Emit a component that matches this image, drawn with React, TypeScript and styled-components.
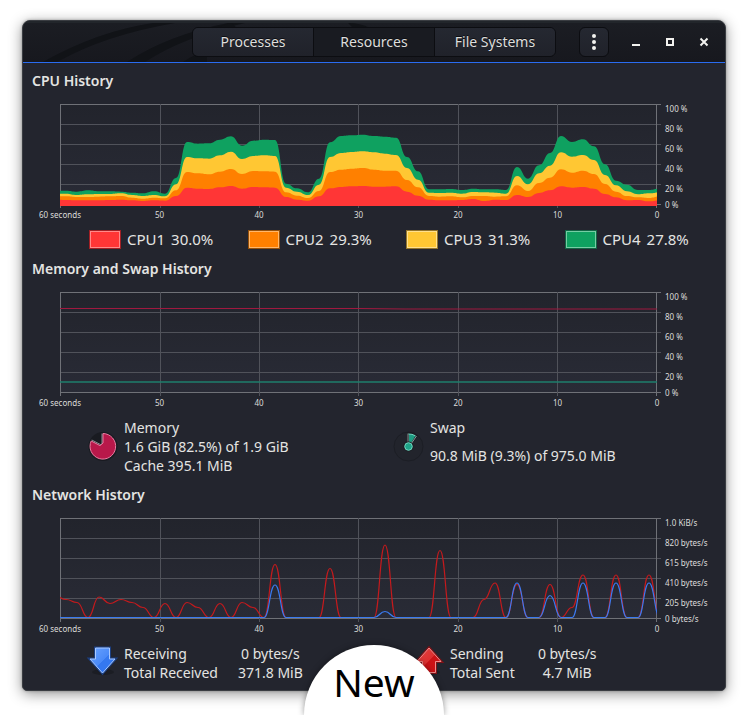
import React from "react";
import styled, { createGlobalStyle } from "styled-components";

const GlobalStyle = createGlobalStyle`
  *, *::before, *::after { box-sizing: border-box; }
  body {
    margin: 0;
    background: #ffffff;
    color: #e4e4e2;
    font-family: "Noto Sans", "Open Sans", sans-serif;
    font-size: 14px;
  }
`;

const Page = styled.div`
  position: relative;
  min-height: 100vh;
  padding: 20px 22px 24px;
  overflow: hidden;
`;

const AppWindow = styled.main`
  border: 1px solid #3a3d42;
  border-radius: 8px 8px 5px 5px;
  background: #23252e;
  box-shadow: 0 3px 14px rgba(0, 0, 0, 0.42), 0 0 3px rgba(0, 0, 0, 0.3);
  overflow: hidden;
  padding: 0 1px 6px;
`;

const HeaderBar = styled.header`
  position: relative;
  display: grid;
  grid-template-columns: 1fr auto 1fr;
  align-items: center;
  height: 42px;
  margin: 0 -1px;
  padding: 0 4px 2px;
  border-top: 2px solid #22262b;
  border-bottom: 1px solid #2a6cf0;
  background: linear-gradient(#1b1d23, #17181e);
`;

const HeaderArt = styled.svg`
  position: absolute;
  inset: 0 auto 0 0;
  height: 39px;
  width: 400px;
`;

const TabGroup = styled.nav`
  position: relative;
  grid-column: 2;
  display: flex;
  border: 1px solid #0c0d11;
  border-radius: 6px;
  overflow: hidden;
`;

const TabButton = styled.button<{ $active?: boolean }>`
  width: 121px;
  height: 28px;
  padding: 0;
  border: 0;
  border-left: 1px solid #0c0d11;
  background: ${(p) => (p.$active ? "#191b21" : "linear-gradient(#252831, #20222a)")};
  color: #dededc;
  font: inherit;
  line-height: 28px;
  text-shadow: 0 -1px 0 #0c0d11;
  &:first-child {
    width: 120px;
    border-left: 0;
  }
`;

const HeaderActions = styled.div`
  position: relative;
  display: flex;
  justify-content: flex-end;
  align-items: center;
`;

const MenuButton = styled.button`
  display: grid;
  place-items: center;
  width: 30px;
  height: 30px;
  margin-right: 10px;
  padding: 0;
  border: 1px solid #0c0d11;
  border-radius: 6px;
  background: linear-gradient(#252831, #20222a);
`;

const WindowButton = styled.button`
  display: grid;
  place-items: center;
  width: 34px;
  height: 30px;
  padding: 0;
  border: 0;
  background: none;
`;

const Section = styled.section`
  padding: 8px 0 2px;
`;

const SectionTitle = styled.h2`
  margin: 0 0 8px 8px;
  font-size: 14px;
  font-weight: 600;
  line-height: 20px;
`;

const ChartFrame = styled.div`
  display: grid;
  grid-template-columns: minmax(0, 1fr) 59px;
  column-gap: 4px;
  padding-left: 36px;
`;

const Plot = styled.svg`
  display: block;
  width: 100%;
  height: 110px;
`;

const ValueAxis = styled.div`
  display: flex;
  flex-direction: column;
  height: 110px;
  color: #dcdcda;
  font-size: 8px;
  line-height: 20px;
  white-space: nowrap;
`;

const ValueLabel = styled.span`
  &:last-child {
    line-height: 12px;
  }
`;

const TimeAxis = styled.div`
  display: flex;
  justify-content: space-between;
  padding-right: 4px;
  color: #dcdcda;
  font-size: 8px;
  line-height: 12px;
`;

const TimeLabel = styled.span`
  display: flex;
  justify-content: center;
  width: 0;
  white-space: nowrap;
`;

const Legend = styled.div<{ $columns: string; $size?: number }>`
  display: grid;
  grid-template-columns: ${(p) => p.$columns};
  margin-top: 9px;
  padding: 0 1px 0 65px;
  font-size: ${(p) => p.$size ?? 14}px;
  line-height: 19px;
`;

const LegendItem = styled.div<{ $gap: number; $align?: string }>`
  display: flex;
  align-items: ${(p) => p.$align ?? "center"};
  gap: ${(p) => p.$gap}px;
  white-space: nowrap;
`;

const Swatch = styled.button<{ $fill: string; $light: string; $edge: string }>`
  width: 32px;
  height: 19px;
  padding: 0;
  border: 1px solid ${(p) => p.$edge};
  background: ${(p) => p.$fill};
  box-shadow: inset 0 0 0 1px ${(p) => p.$light};
`;

const Lines = styled.div<{ $spread?: boolean }>`
  display: flex;
  flex-direction: column;
  gap: ${(p) => (p.$spread ? 9 : 0)}px;
  align-self: flex-start;
`;

const TrafficTable = styled.table`
  border-collapse: collapse;
  th {
    padding: 0 20px 0 0;
    font-weight: 400;
    text-align: left;
  }
  td {
    min-width: 65px;
    padding: 0;
    text-align: center;
  }
`;

const Icon = styled.svg`
  display: block;
  flex: none;
  overflow: visible;
`;

const Badge = styled.div`
  position: absolute;
  bottom: 0;
  left: 50%;
  width: 140px;
  height: 70px;
  margin-left: -70px;
  border-radius: 70px 70px 0 0;
  background: #ffffff;
  box-shadow: 0 0 6px rgba(0, 0, 0, 0.4);
  color: #000000;
  font-size: 39px;
  line-height: 74px;
  text-align: center;
`;

const WIDTH = 596;
const STEP = 11;
const FIRST = -5;
const COLUMNS = [0.5, 100.5, 199.5, 298.5, 398.5, 497.5, 596.5];
const ROWS = [0.5, 20.5, 40.5, 60.5, 80.5, 100.5];

/** Smooth line through evenly spaced samples, level at each sample. */
function curve(ys: number[]) {
  return ys
    .map((y, i) => {
      const x = FIRST + i * STEP;
      if (i === 0) return `M${x} ${y}`;
      const mid = x - STEP / 2;
      return `C${mid} ${ys[i - 1]} ${mid} ${y} ${x} ${y}`;
    })
    .join("");
}

/* Upper edge of each stacked CPU band; 27 is full load and 327 is idle. */
const cpuBands = [
  {
    color: "#0fa160",
    tops: [
      287, 287, 290, 286, 289, 289, 290, 293, 295, 289, 296, 249, 141, 146, 145, 134, 124, 152, 137, 134, 135, 266,
      280, 292, 251, 142, 123, 121, 119, 123, 125, 128, 186, 229, 283, 283, 282, 285, 281, 283, 283, 285, 216, 251,
      211, 174, 123, 141, 133, 154, 208, 257, 269, 285, 285, 281,
    ],
  },
  {
    color: "#ffc733",
    tops: [
      296, 296, 300, 298, 297, 297, 295, 300, 303, 300, 304, 268, 186, 190, 191, 181, 170, 192, 183, 181, 183, 278,
      290, 300, 269, 186, 174, 171, 169, 172, 176, 180, 219, 254, 293, 294, 293, 296, 291, 292, 293, 296, 243, 268,
      235, 212, 172, 185, 180, 195, 240, 271, 289, 298, 295, 292,
    ],
  },
  {
    color: "#ff8000",
    tops: [
      303, 304, 306, 306, 305, 304, 303, 308, 311, 308, 310, 286, 231, 235, 238, 230, 222, 237, 228, 229, 230, 292,
      302, 309, 288, 231, 224, 221, 219, 224, 227, 227, 255, 277, 303, 305, 304, 307, 303, 303, 305, 304, 271, 288,
      264, 248, 223, 233, 227, 237, 267, 290, 303, 307, 309, 304,
    ],
  },
  {
    color: "#ff3636",
    tops: [
      314, 315, 316, 316, 316, 315, 314, 316, 318, 316, 317, 303, 278, 281, 282, 277, 273, 281, 276, 277, 278, 306,
      314, 317, 304, 280, 276, 274, 273, 275, 275, 274, 290, 302, 314, 316, 316, 315, 312, 318, 314, 315, 300, 306,
      294, 286, 274, 278, 276, 281, 297, 307, 316, 315, 319, 316,
    ],
  },
];

const IDLE = 99.5;
function traffic(peaks: Record<number, number>) {
  return Array.from({ length: 56 }, (_, i) => peaks[i] ?? IDLE);
}

const sending = traffic({
  0: 78, 1: 81.5, 2: 84.5, 4: 79, 5: 85.5, 6: 81.5, 7: 84.5, 8: 89.5, 10: 85.5, 12: 84.5, 13: 89.5, 15: 85.5,
  17: 84.5, 18: 89.5, 20: 46.5, 25: 50.5, 30: 27, 35: 32.5, 39: 81.5, 40: 65, 42: 66.5, 45: 66.5, 47: 89.5,
  48: 57, 51: 57, 54: 57,
});
const receiving = traffic({ 20: 67, 30: 93.5, 42: 65, 45: 77.5, 48: 65, 51: 65, 54: 65 });

const TIMES = ["60 seconds", "50", "40", "30", "20", "10", "0"];
const PERCENTS = ["100 %", "80 %", "60 %", "40 %", "20 %", "0 %"];
const RATES = ["1.0 KiB/s", "820 bytes/s", "615 bytes/s", "410 bytes/s", "205 bytes/s", "0 bytes/s"];

function Chart({ id, label, values, children }: { id: string; label: string; values: string[]; children: React.ReactNode }) {
  return (
    <ChartFrame>
      <Plot viewBox="0 -5 601 110" preserveAspectRatio="none" role="img" aria-label={label}>
        <defs>
          <linearGradient id={`${id}-bg`} x1="0" y1="0" x2="0" y2="1">
            <stop offset="0" stopColor="#22242c" />
            <stop offset="1" stopColor="#292b36" />
          </linearGradient>
          <clipPath id={`${id}-clip`}>
            <rect x="0" y="0" width={WIDTH + 1} height="102" />
          </clipPath>
        </defs>
        <rect x="0" y="0" width={WIDTH} height="101" fill={`url(#${id}-bg)`} />
        {ROWS.map((y, i) => (
          <path key={y} d={`M0 ${y}H601`} stroke={i === 0 || i === 5 ? "#6f7177" : "#50525a"} />
        ))}
        {COLUMNS.map((x, i) => (
          <path key={x} d={`M${x} 0V104`} stroke={i === 0 || i === 6 ? "#6f7177" : "#50525a"} />
        ))}
        <g clipPath={`url(#${id}-clip)`} fill="none">
          {children}
        </g>
      </Plot>
      <ValueAxis>
        {values.map((v) => (
          <ValueLabel key={v}>{v}</ValueLabel>
        ))}
      </ValueAxis>
      <TimeAxis>
        {TIMES.map((t) => (
          <TimeLabel key={t}>{t}</TimeLabel>
        ))}
      </TimeAxis>
    </ChartFrame>
  );
}

const cpus = [
  { name: "CPU1", load: "30.0%", fill: "#ff3636", light: "#ff8a8a", edge: "#a01f24" },
  { name: "CPU2", load: "29.3%", fill: "#ff8000", light: "#ffb76b", edge: "#95500a" },
  { name: "CPU3", load: "31.3%", fill: "#ffc733", light: "#ffe08d", edge: "#94752a" },
  { name: "CPU4", load: "27.8%", fill: "#0fa160", light: "#75cda4", edge: "#126544" },
];

function MemoryPie() {
  return (
    <Icon width="28" height="30" viewBox="0 1 28 30" aria-hidden="true">
      <circle cx="14" cy="15.5" r="14.5" fill="#191b21" />
      <path d="M13 13.5V2.5" stroke="#8b8d92" />
      <path d="M12 13.8L2.8 9" stroke="#8b8d92" />
      <path d="M14 2.5A12.8 12.8 0 1 1 2.2 10L11 14.6L14 12Z" fill="#b8184a" stroke="#ec7da3" />
    </Icon>
  );
}

function SwapPie() {
  return (
    <Icon width="28" height="30" viewBox="0 1 28 30" aria-hidden="true">
      <circle cx="13.5" cy="15.5" r="14.5" fill="#22242c" stroke="#1c1e25" />
      <path d="M13 13V2.5Q17.5 2.3 21.5 5L15.5 13.5Z" fill="#191b21" stroke="#191b21" strokeWidth="2" />
      <path d="M14 12.5V3Q17 3 20.5 4.8L15.5 13Z" fill="#1e9c82" />
      <path d="M13 13V2.5M21.5 5L16 13" stroke="#8f9597" />
      <path d="M13.5 3Q17 2.8 20.5 4.8" stroke="#77d9c4" fill="none" />
      <circle cx="13.5" cy="15.5" r="5" fill="#191b21" />
      <circle cx="13.5" cy="15.5" r="3.8" fill="#1fa589" stroke="#77d9c4" />
    </Icon>
  );
}

function Arrow({ up }: { up?: boolean }) {
  const id = up ? "arrow-up" : "arrow-down";
  const shape = up ? "M14 2L26 15.5H20.5V26.5H7.5V15.5H2Z" : "M6.5 2H20.5V13H26L13.5 27L1 13H6.5Z";
  return (
    <Icon width="28" height="30" viewBox="0 -2 28 30" aria-hidden="true">
      <defs>
        <linearGradient id={id} x1="0" y1="0" x2="1" y2="1">
          <stop offset="0" stopColor={up ? "#e04444" : "#6aa3ff"} />
          <stop offset="0.5" stopColor={up ? "#dc3030" : "#4a8af8"} />
          <stop offset="0.52" stopColor={up ? "#cb1216" : "#3478f0"} />
          <stop offset="1" stopColor={up ? "#cb1216" : "#3478f0"} />
        </linearGradient>
      </defs>
      <ellipse cx="14" cy="26" rx="11" ry="3" fill="#1b1d24" />
      <path d={shape} fill="none" stroke={up ? "#7c1217" : "#1c3f80"} strokeWidth="3" />
      <path d={shape} fill={`url(#${id})`} stroke={up ? "#f08b8b" : "#a9c9ff"} />
    </Icon>
  );
}

export default function App() {
  return (
    <>
      <GlobalStyle />
      <Page>
        <AppWindow>
          <HeaderBar>
            <HeaderArt viewBox="0 0 400 39" aria-hidden="true">
              <g fill="#111317">
                <path d="M20 39Q75 8 130 0H152Q82 12 34 39Z" />
                <path d="M104 39Q145 12 205 0H222Q160 14 122 39Z" />
                <path d="M160 39Q172 31 184 27V39Z" />
                <path d="M192 5L208 0L214 5Z" />
                <path d="M325 0Q337 0 347 5H330Z" />
              </g>
            </HeaderArt>
            <TabGroup aria-label="Views">
              <TabButton type="button">Processes</TabButton>
              <TabButton type="button" $active aria-current="page">
                Resources
              </TabButton>
              <TabButton type="button">File Systems</TabButton>
            </TabGroup>
            <HeaderActions>
              <MenuButton type="button" aria-label="Menu">
                <Icon width="4" height="16" viewBox="0 0 4 16" fill="#f2f2ef">
                  <circle cx="2" cy="2" r="2" />
                  <circle cx="2" cy="8" r="2" />
                  <circle cx="2" cy="14" r="2" />
                </Icon>
              </MenuButton>
              <WindowButton type="button" aria-label="Minimize">
                <Icon width="8" height="8" viewBox="0 0 8 8">
                  <path d="M0 7H8" stroke="#f2f2ef" strokeWidth="2" />
                </Icon>
              </WindowButton>
              <WindowButton type="button" aria-label="Maximize">
                <Icon width="8" height="8" viewBox="0 0 8 8">
                  <path d="M1 1H7V7H1Z" fill="none" stroke="#f2f2ef" strokeWidth="2" />
                </Icon>
              </WindowButton>
              <WindowButton type="button" aria-label="Close">
                <Icon width="8" height="8" viewBox="0 0 8 8">
                  <path d="M0.5 0.5L7.5 7.5M7.5 0.5L0.5 7.5" stroke="#f2f2ef" strokeWidth="2" />
                </Icon>
              </WindowButton>
            </HeaderActions>
          </HeaderBar>

          <Section>
            <SectionTitle>CPU History</SectionTitle>
            <Chart id="cpu" label="CPU load over the last minute" values={PERCENTS}>
              <g transform="translate(0 -9) scale(1 0.33333)">
                {cpuBands.map((band) => (
                  <path key={band.color} d={`${curve(band.tops)}V333H${FIRST}Z`} fill={band.color} />
                ))}
              </g>
            </Chart>
            <Legend $columns="repeat(4, 1fr)" $size={15}>
              {cpus.map((cpu) => (
                <LegendItem key={cpu.name} $gap={6}>
                  <Swatch type="button" aria-label={`${cpu.name} color`} $fill={cpu.fill} $light={cpu.light} $edge={cpu.edge} />
                  <span>{cpu.name}</span>
                  <span>{cpu.load}</span>
                </LegendItem>
              ))}
            </Legend>
          </Section>

          <Section>
            <SectionTitle>Memory and Swap History</SectionTitle>
            <Chart id="memory" label="Memory and swap use over the last minute" values={PERCENTS}>
              <path d="M0 16.5H298L345 17H597" stroke="#a0193f" />
              <path d="M0 90H597" stroke="#1e7f6c" strokeWidth="1.4" />
            </Chart>
            <Legend $columns="306fr 328fr">
              <LegendItem $gap={7}>
                <MemoryPie />
                <Lines>
                  <span>Memory</span>
                  <span>1.6 GiB (82.5%) of 1.9 GiB</span>
                  <span>Cache 395.1 MiB</span>
                </Lines>
              </LegendItem>
              <LegendItem $gap={7}>
                <SwapPie />
                <Lines $spread>
                  <span>Swap</span>
                  <span>90.8 MiB (9.3%) of 975.0 MiB</span>
                </Lines>
              </LegendItem>
            </Legend>
          </Section>

          <Section>
            <SectionTitle>Network History</SectionTitle>
            <Chart id="network" label="Network traffic over the last minute" values={RATES}>
              <path d={curve(sending)} stroke="#c41a1d" strokeWidth="1.2" />
              <path d={curve(receiving)} stroke="#3a7af0" strokeWidth="1.2" />
            </Chart>
            <Legend $columns="326fr 308fr">
              <LegendItem $gap={7} $align="flex-start">
                <Arrow />
                <TrafficTable>
                  <tbody>
                    <tr>
                      <th scope="row">Receiving</th>
                      <td>0 bytes/s</td>
                    </tr>
                    <tr>
                      <th scope="row">Total Received</th>
                      <td>371.8 MiB</td>
                    </tr>
                  </tbody>
                </TrafficTable>
              </LegendItem>
              <LegendItem $gap={7} $align="flex-start">
                <Arrow up />
                <TrafficTable>
                  <tbody>
                    <tr>
                      <th scope="row">Sending</th>
                      <td>0 bytes/s</td>
                    </tr>
                    <tr>
                      <th scope="row">Total Sent</th>
                      <td>4.7 MiB</td>
                    </tr>
                  </tbody>
                </TrafficTable>
              </LegendItem>
            </Legend>
          </Section>
        </AppWindow>
        <Badge>New</Badge>
      </Page>
    </>
  );
}
